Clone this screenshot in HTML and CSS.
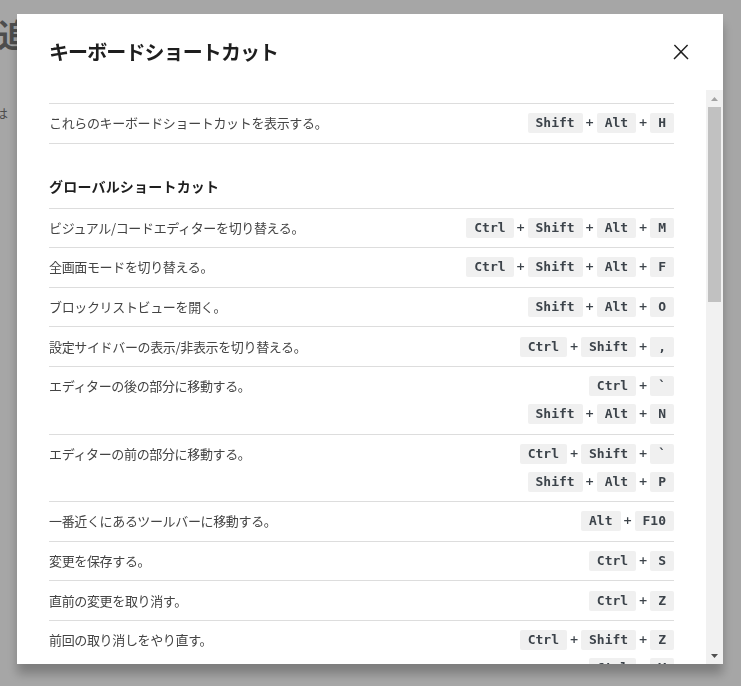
FILE: index.html
```html
<!DOCTYPE html>
<html lang="ja">
<head>
<meta charset="utf-8">
<title>キーボードショートカット</title>
<link rel="stylesheet" href="styles.css">
</head>
<body>
<div class="page">
  <h1 class="page-title">追加</h1>
  <p class="page-text">は</p>
</div>
<div class="overlay">
  <div class="modal" role="dialog">
    <div class="modal-header">
      <h1 class="modal-title">キーボードショートカット</h1>
      <button class="close" aria-label="閉じる">
        <svg width="24" height="24" viewBox="0 0 24 24"><path d="M13 11.8l6.1-6.3-1-1-6.1 6.2-6.1-6.2-1 1 6.1 6.3-6.5 6.7 1 1 6.5-6.6 6.5 6.6 1-1z" fill="#1e1e1e"/></svg>
      </button>
    </div>
    <div class="modal-body">
      <div class="modal-content">
        <section class="section">
          <ul class="list">
            <li class="shortcut">
              <div class="desc">これらのキーボードショートカットを表示する。</div>
              <div class="combos">
                <div class="combo"><kbd>Shift</kbd><span class="plus">+</span><kbd>Alt</kbd><span class="plus">+</span><kbd>H</kbd></div>
              </div>
            </li>
          </ul>
        </section>
        <section class="section">
          <h2 class="section-title">グローバルショートカット</h2>
          <ul class="list">
            <li class="shortcut">
              <div class="desc">ビジュアル/コードエディターを切り替える。</div>
              <div class="combos">
                <div class="combo"><kbd>Ctrl</kbd><span class="plus">+</span><kbd>Shift</kbd><span class="plus">+</span><kbd>Alt</kbd><span class="plus">+</span><kbd>M</kbd></div>
              </div>
            </li>
            <li class="shortcut">
              <div class="desc">全画面モードを切り替える。</div>
              <div class="combos">
                <div class="combo"><kbd>Ctrl</kbd><span class="plus">+</span><kbd>Shift</kbd><span class="plus">+</span><kbd>Alt</kbd><span class="plus">+</span><kbd>F</kbd></div>
              </div>
            </li>
            <li class="shortcut">
              <div class="desc">ブロックリストビューを開く。</div>
              <div class="combos">
                <div class="combo"><kbd>Shift</kbd><span class="plus">+</span><kbd>Alt</kbd><span class="plus">+</span><kbd>O</kbd></div>
              </div>
            </li>
            <li class="shortcut">
              <div class="desc">設定サイドバーの表示/非表示を切り替える。</div>
              <div class="combos">
                <div class="combo"><kbd>Ctrl</kbd><span class="plus">+</span><kbd>Shift</kbd><span class="plus">+</span><kbd>,</kbd></div>
              </div>
            </li>
            <li class="shortcut">
              <div class="desc">エディターの後の部分に移動する。</div>
              <div class="combos">
                <div class="combo"><kbd>Ctrl</kbd><span class="plus">+</span><kbd>`</kbd></div>
                <div class="combo"><kbd>Shift</kbd><span class="plus">+</span><kbd>Alt</kbd><span class="plus">+</span><kbd>N</kbd></div>
              </div>
            </li>
            <li class="shortcut">
              <div class="desc">エディターの前の部分に移動する。</div>
              <div class="combos">
                <div class="combo"><kbd>Ctrl</kbd><span class="plus">+</span><kbd>Shift</kbd><span class="plus">+</span><kbd>`</kbd></div>
                <div class="combo"><kbd>Shift</kbd><span class="plus">+</span><kbd>Alt</kbd><span class="plus">+</span><kbd>P</kbd></div>
              </div>
            </li>
            <li class="shortcut">
              <div class="desc">一番近くにあるツールバーに移動する。</div>
              <div class="combos">
                <div class="combo"><kbd>Alt</kbd><span class="plus">+</span><kbd>F10</kbd></div>
              </div>
            </li>
            <li class="shortcut">
              <div class="desc">変更を保存する。</div>
              <div class="combos">
                <div class="combo"><kbd>Ctrl</kbd><span class="plus">+</span><kbd>S</kbd></div>
              </div>
            </li>
            <li class="shortcut">
              <div class="desc">直前の変更を取り消す。</div>
              <div class="combos">
                <div class="combo"><kbd>Ctrl</kbd><span class="plus">+</span><kbd>Z</kbd></div>
              </div>
            </li>
            <li class="shortcut">
              <div class="desc">前回の取り消しをやり直す。</div>
              <div class="combos">
                <div class="combo"><kbd>Ctrl</kbd><span class="plus">+</span><kbd>Shift</kbd><span class="plus">+</span><kbd>Z</kbd></div>
                <div class="combo"><kbd>Ctrl</kbd><span class="plus">+</span><kbd>Y</kbd></div>
              </div>
            </li>
          </ul>
        </section>
      </div>
      <div class="scrollbar" aria-hidden="true">
        <div class="sb-button"><svg width="7" height="4" viewBox="0 0 7 4"><polygon points="3.5,0 7,4 0,4" fill="#a3a3a3"/></svg></div>
        <div class="sb-thumb"></div>
        <div class="sb-track"></div>
        <div class="sb-button"><svg width="7" height="4" viewBox="0 0 7 4"><polygon points="0,0 7,0 3.5,4" fill="#505050"/></svg></div>
      </div>
    </div>
  </div>
</div>
</body>
</html>
```

FILE: styles.css
```css
html, body {
  margin: 0;
  height: 100%;
}

body {
  background: #ffffff;
  font-family: "Noto Sans CJK JP", "Noto Sans", sans-serif;
  overflow: hidden;
}

.page {
  padding: 13px 0 0 0;
}

.page-title {
  margin: 0 0 0 -2px;
  font-size: 32px;
  line-height: 40px;
  font-weight: 600;
  color: #777777;
}

.page-text {
  margin: 50px 0 0 -5px;
  font-size: 13px;
  line-height: 20px;
  color: #777777;
}

.overlay {
  position: fixed;
  inset: 0;
  background: rgba(0, 0, 0, 0.35);
  display: flex;
  justify-content: flex-start;
  align-items: flex-start;
  padding: 14px 0 0 17px;
}

.modal {
  width: 706px;
  height: 650px;
  background: #ffffff;
  box-shadow: 0 10px 10px rgba(0, 0, 0, 0.25);
  display: flex;
  flex-direction: column;
}

.modal-header {
  flex: none;
  height: 76px;
  display: flex;
  align-items: center;
  justify-content: space-between;
  padding: 0 30px 0 32px;
}

.modal-title {
  margin: 0;
  font-size: 20px;
  line-height: 28px;
  font-weight: 600;
  color: #1e1e1e;
  letter-spacing: -0.9px;
}

.close {
  width: 24px;
  height: 24px;
  padding: 0;
  border: 0;
  background: none;
  display: flex;
  cursor: pointer;
}

.modal-body {
  flex: 1;
  min-height: 0;
  display: flex;
}

.modal-content {
  flex: 1;
  overflow: hidden;
  padding: 13px 32px 0 32px;
}

.list {
  margin: 0;
  padding: 0;
  list-style: none;
}

.shortcut {
  display: flex;
  justify-content: space-between;
  align-items: flex-start;
  padding: 9.3px 0;
  border-top: 1px solid #dddddd;
}

.shortcut:last-child {
  border-bottom: 1px solid #dddddd;
}

.desc {
  font-size: 13px;
  line-height: 20px;
  color: #444444;
  letter-spacing: -0.35px;
}

.section-title {
  margin: 32px 0 12px 0;
  font-size: 14px;
  line-height: 20px;
  font-weight: 600;
  color: #1e1e1e;
  letter-spacing: 0.2px;
}

.combos {
  display: flex;
  flex-direction: column;
  align-items: flex-end;
  gap: 8px;
}

.combo {
  display: flex;
  align-items: center;
}

kbd {
  display: block;
  height: 20px;
  line-height: 20px;
  padding: 0 8px;
  background: #f0f0f0;
  color: #3c434a;
  border-radius: 2px;
  font-family: "DejaVu Sans Mono", "Liberation Mono", monospace;
  font-weight: bold;
  font-size: 13px;
}

.plus {
  width: 14px;
  text-align: center;
  font-family: "DejaVu Sans", sans-serif;
  font-weight: bold;
  font-size: 11px;
  line-height: 20px;
  color: #3c434a;
}

.scrollbar {
  flex: none;
  width: 17px;
  background: #f1f1f1;
  display: flex;
  flex-direction: column;
}

.sb-button {
  flex: none;
  height: 17px;
  display: flex;
  align-items: center;
  justify-content: center;
}

.sb-thumb {
  flex: none;
  height: 195px;
  margin: 0 2px;
  background: #c1c1c1;
}

.sb-track {
  flex: 1;
}
```
